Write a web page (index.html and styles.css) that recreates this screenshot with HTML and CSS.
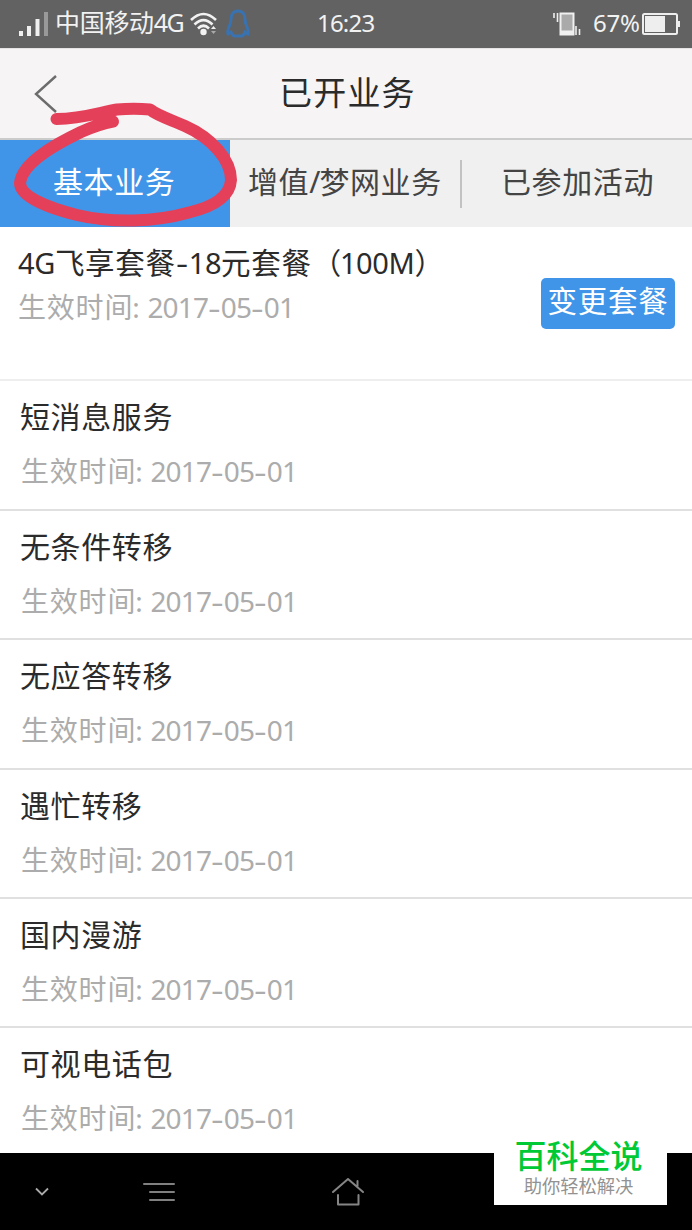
FILE: index.html
```html
<!DOCTYPE html>
<html lang="zh-CN">
<head>
<meta charset="utf-8">
<title>已开业务</title>
<link rel="stylesheet" href="styles.css">
</head>
<body>
<div class="screen">
  <div class="status">
    <svg class="signal" width="30" height="24" viewBox="0 0 30 24"><g fill="#f0f0f0"><rect x="0" y="19" width="4" height="5"/><rect x="8" y="14" width="4" height="10"/><rect x="16.500" y="7" width="4" height="17"/></g><rect x="25" y="0" width="4" height="24" fill="#999"/></svg>
    <span class="carrier">中国移动<span class="latin">4G</span></span>
    <svg class="wifi" width="28" height="24" viewBox="0 0 28 24"><g fill="none" stroke="#f2f2f2" stroke-width="2.600"><path d="M1 8Q13.500-4 26 8M4.500 12.500Q13.500 3.500 22.500 12.500M8 16.500Q13.500 11 19 16.500"/></g><circle cx="13.500" cy="20" r="3.200" fill="#f2f2f2"/><path d="M21 17l2.500-3 2.500 3z" fill="#f2f2f2"/><path d="M21 19l2.500 3 2.500-3z" fill="#aaa"/></svg>
    <svg class="bell" width="26" height="30" viewBox="0 0 26 30"><path d="M13 2C8 2 6 6 6 10Q6 14 4 18Q2 23 3 25L6 23Q7 26 9 27H17Q19 26 20 23L23 25Q24 23 22 18Q20 14 20 10C20 6 18 2 13 2Z" fill="none" stroke="#3972b0" stroke-width="3"/></svg>
    <span class="clock">16:23</span>
    <svg class="vibrate" width="28" height="24" viewBox="0 0 28 24"><g fill="none" stroke="#eee" stroke-width="1.600"><path d="M1 1v5M4.500 1v9M23 14v9M26.500 17v6"/></g><rect x="6.500" y="0.500" width="15" height="23" fill="#f0f0f0"/><rect x="8.500" y="2.500" width="11" height="16" fill="#aaa"/></svg>
    <span class="percent">67%</span>
    <svg class="battery" width="39" height="22" viewBox="0 0 39 22"><rect x="1" y="1" width="34" height="20" rx="1.500" fill="none" stroke="#eee" stroke-width="2"/><path d="M3 3h20v16H3z" fill="#eee"/><path d="M36 8h2v6h-2z" fill="#eee"/></svg>
  </div>
  <header class="header">
    <svg class="back" width="24" height="40" viewBox="0 0 24 40"><path d="M22 2L2 20L22 38" fill="none" stroke="#6c6c6c" stroke-width="2.400"/></svg>
    <h1 class="heading">已开业务</h1>
  </header>
  <nav class="tabs">
    <div class="tab tab-active">基本业务</div>
    <div class="tab tab-extra">增值<span class="latin">/</span>梦网业务</div>
    <div class="divider"></div>
    <div class="tab tab-events">已参加活动</div>
  </nav>
  <main class="list">
    <section class="plan">
      <div class="info">
        <div class="plan-name"><span class="latin">4G</span>飞享套餐<span class="latin dash">-</span><span class="latin">18</span>元套餐<span class="paren">（</span><span class="latin">100M</span>）</div>
        <div class="date date-plan">生效时间<span class="stamp">: 2017<i>-</i>05<i>-</i>01</span></div>
      </div>
      <button class="change">变更套餐</button>
    </section>
    <section class="row"><div class="name">短消息服务</div><div class="date">生效时间<span class="stamp">: 2017<i>-</i>05<i>-</i>01</span></div></section>
    <section class="row"><div class="name">无条件转移</div><div class="date">生效时间<span class="stamp">: 2017<i>-</i>05<i>-</i>01</span></div></section>
    <section class="row"><div class="name">无应答转移</div><div class="date">生效时间<span class="stamp">: 2017<i>-</i>05<i>-</i>01</span></div></section>
    <section class="row"><div class="name">遇忙转移</div><div class="date">生效时间<span class="stamp">: 2017<i>-</i>05<i>-</i>01</span></div></section>
    <section class="row"><div class="name">国内漫游</div><div class="date">生效时间<span class="stamp">: 2017<i>-</i>05<i>-</i>01</span></div></section>
    <section class="row"><div class="name">可视电话包</div><div class="date">生效时间<span class="stamp">: 2017<i>-</i>05<i>-</i>01</span></div></section>
  </main>
  <footer class="navbar">
    <svg class="nav-down" width="14" height="10" viewBox="0 0 14 10"><path d="M1 1.500L7 7.500L13 1.500" fill="none" stroke="#aaa" stroke-width="1.800"/></svg>
    <svg class="nav-menu" width="32" height="20" viewBox="0 0 32 20"><path d="M1 2H31M7 10H31M7 18H31" fill="none" stroke="#808080" stroke-width="2" stroke-linecap="round"/></svg>
    <svg class="nav-home" width="32" height="28" viewBox="0 0 32 28"><path d="M1 14L16 1L31 14M25.500 8V3M6 17V26.500H26.500V17" fill="none" stroke="#858585" stroke-width="2" stroke-linecap="round" stroke-linejoin="round"/></svg>
  </footer>
  <svg class="mark" width="250" height="140" viewBox="0 95 250 140"><path d="M56.500 119C82 119 101 112 117 109.500Q134 108 150 109.500C158 116 172 120 185 126C212 138 231 160 231 180C230 197 212 207 189 212.500C155 222 113 223.500 77 215C45 207 20 196 20 183C22 162 58 143 81 132Q99 124 113 121.500" fill="none" stroke="#e4405a" stroke-width="12" stroke-linecap="round" stroke-linejoin="round"/></svg>
  <aside class="brand"><div class="brand-name">百科全说</div><div class="brand-line">助你轻松解决</div></aside>
</div>
</body>
</html>
```
FILE: styles.css
```css
* { box-sizing: border-box; }
body { margin: 0; }
.screen {
  position: relative;
  width: 692px;
  height: 1230px;
  display: flex;
  flex-direction: column;
  overflow: hidden;
  background: #fff;
  color: #2b2b2b;
  font-family: "Noto Sans CJK SC", sans-serif;
  white-space: nowrap;
}
svg { display: block; flex: none; }
.latin, .stamp, .clock, .percent { font-family: "Noto Sans", sans-serif; }
.status {
  display: flex;
  flex: none;
  align-items: center;
  height: 48px;
  padding-left: 19px;
  background: #626262;
  color: #f2f2f2;
  font-size: 23px;
  line-height: 44px;
}
.carrier { width: 130px; margin-left: 6px; font-size: 25px; letter-spacing: -0.3px; padding-bottom: 5px; }
.carrier .latin { font-size: 25px; letter-spacing: -1.500px; }
.wifi { margin-left: 5px; }
.bell { margin-left: 7px; }
.clock { width: 60px; margin-left: 66px; font-size: 24px; letter-spacing: -0.8px; padding-bottom: 2px; }
.vibrate { margin-left: 176px; }
.percent { width: 48px; margin-left: 12px; font-size: 24px; letter-spacing: -0.2px; padding-bottom: 3px; }
.battery { margin-left: 1px; }
.header {
  display: flex;
  flex: none;
  align-items: center;
  height: 92px;
  padding-left: 34px;
  background: #f6f4f5;
  border-top: 1px solid #e4e4e4;
  border-bottom: 2px solid #cbcbcb;
}
.heading { margin: 0 0 0 221px; padding-bottom: 5px; font-size: 33px; font-weight: 400; letter-spacing: 1.2px; line-height: 44px; }
.tabs { display: flex; flex: none; align-items: center; height: 87px; background: #f0f0f0; color: #444; }
.tab { font-size: 30px; letter-spacing: 0.6px; line-height: 81px; height: 87px; }
.tab-active { width: 230px; padding-left: 53px; background: #4095e8; color: #fff; }
.tab-extra { width: 230px; padding-left: 18px; }
.tab-extra .latin { letter-spacing: -1px; }
.divider { width: 2px; height: 48px; background: #c2c2c2; }
.tab-events { padding-left: 39px; }
.list { height: 926px; flex: none; overflow: hidden; }
.plan { display: flex; height: 154px; padding: 12px 17px 0 18px; border-bottom: 2px solid #eee; }
.info { flex: 1; }
.plan-name { height: 45px; font-size: 29.500px; letter-spacing: 0.7px; line-height: 44px; }
.plan-name .latin { font-size: 29px; letter-spacing: -0.4px; }
.plan-name .dash { display: inline-block; width: 13px; transform: scaleX(1.3); transform-origin: left; }
.paren { margin-right: -2px; }
.date { color: #acacac; font-size: 28px; letter-spacing: 0.8px; line-height: 44px; padding-left: 1px; }
.date-plan { padding-left: 0; }
.stamp { font-size: 28px; letter-spacing: -0.8px; word-spacing: 2px; margin-left: -1px; }
.stamp i { display: inline-block; width: 12.500px; font-style: normal; transform: scaleX(1.4); transform-origin: left; }
.change {
  width: 134px;
  height: 51px;
  margin-top: 39px;
  padding: 0 0 9px;
  border: 0;
  border-radius: 5px;
  background: #4095e8;
  color: #fff;
  font-family: inherit;
  font-size: 29.500px;
  letter-spacing: 0.7px;
  line-height: 42px;
}
.row { height: 129.300px; padding: 13px 20px 0; border-bottom: 2px solid #e0e0e0; }
.row:nth-child(2) { height: 130px; }
.row .name { height: 54px; font-size: 30px; letter-spacing: 0.6px; line-height: 43px; }
.navbar { display: flex; flex: none; align-items: center; height: 77px; padding-left: 35px; background: #000; }
.nav-menu { margin-left: 94px; }
.nav-home { margin-left: 157px; }
.mark { position: absolute; left: 0; top: 95px; }
.brand {
  position: absolute;
  left: 494px;
  top: 1134px;
  width: 173px;
  height: 71px;
  background: #fff;
  text-align: center;
}
.brand-name { height: 40px; color: #00c936; font-size: 32px; font-weight: 500; line-height: 40px; padding-right: 4px; }
.brand-line { color: #929292; font-size: 18.300px; line-height: 22px; padding-right: 4px; }
```
